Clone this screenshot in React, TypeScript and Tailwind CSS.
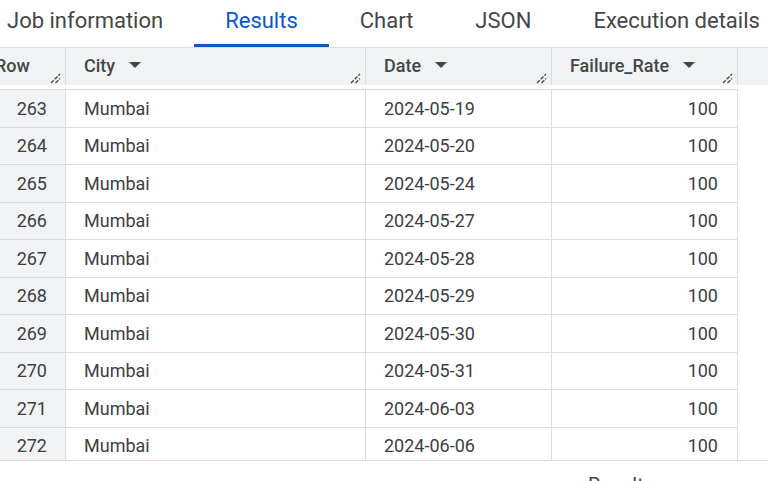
import React from 'react';

const tabs = ['Job information', 'Results', 'Chart', 'JSON', 'Execution details'];

const rows = [
  { n: 263, city: 'Mumbai', date: '2024-05-19', rate: 100 },
  { n: 264, city: 'Mumbai', date: '2024-05-20', rate: 100 },
  { n: 265, city: 'Mumbai', date: '2024-05-24', rate: 100 },
  { n: 266, city: 'Mumbai', date: '2024-05-27', rate: 100 },
  { n: 267, city: 'Mumbai', date: '2024-05-28', rate: 100 },
  { n: 268, city: 'Mumbai', date: '2024-05-29', rate: 100 },
  { n: 269, city: 'Mumbai', date: '2024-05-30', rate: 100 },
  { n: 270, city: 'Mumbai', date: '2024-05-31', rate: 100 },
  { n: 271, city: 'Mumbai', date: '2024-06-03', rate: 100 },
  { n: 272, city: 'Mumbai', date: '2024-06-06', rate: 100 },
];

function SortArrow() {
  return (
    <svg width="12" height="6" viewBox="0 0 12 6" className="ml-[14px] shrink-0">
      <path d="M0 0 L12 0 L6 6 Z" fill="#444746" />
    </svg>
  );
}

function ResizeHandle() {
  return (
    <svg width="11" height="11" viewBox="0 0 11 11" className="absolute right-[4px] bottom-[1px]">
      <path d="M1 10 L10 1 M5.5 10 L10 5.5" stroke="#444746" strokeWidth="1.3" strokeDasharray="4 1.2" fill="none" />
    </svg>
  );
}

export default function App() {
  return (
    <div className="w-[768px] h-[481px] overflow-hidden bg-white font-['Roboto',sans-serif] flex flex-col">
      {/* Tabs */}
      <div className="h-[47px] flex shrink-0 ml-[-24px]">
        {tabs.map((t) => {
          const active = t === 'Results';
          return (
            <div key={t} className="flex flex-col shrink-0 px-[31px]">
              <div
                className={
                  'h-[44px] pb-[3px] flex items-center text-[22px] whitespace-nowrap ' +
                  (active ? 'text-[#0b57d0]' : 'text-[#444746]')
                }
              >
                {t}
              </div>
              <div className={'h-[3px] -mx-[31px] ' + (active ? 'bg-[#0b57d0]' : '')} />
            </div>
          );
        })}
      </div>

      {/* Header */}
      <div className="h-[38px] flex shrink-0 bg-[#f1f3f4] border-t border-[#dadce0] text-[18px] font-medium text-[#444746]">
        <div className="relative w-[66px] border-r border-[#dadce0] flex items-center">
          <span className="ml-[-5px] -mt-[3px]">Row</span>
          <ResizeHandle />
        </div>
        <div className="relative w-[300px] border-r border-[#dadce0] flex items-center pl-[18px]">
          <span className="-mt-[3px]">City</span>
          <span className="-mt-[3px] flex"><SortArrow /></span>
          <ResizeHandle />
        </div>
        <div className="relative w-[186px] border-r border-[#dadce0] flex items-center pl-[18px]">
          <span className="-mt-[3px]">Date</span>
          <span className="-mt-[3px] flex"><SortArrow /></span>
          <ResizeHandle />
        </div>
        <div className="relative w-[186px] border-r border-[#dadce0] flex items-center pl-[18px]">
          <span className="-mt-[3px]">Failure_Rate</span>
          <span className="-mt-[3px] flex"><SortArrow /></span>
          <ResizeHandle />
        </div>
        <div className="flex-1" />
      </div>

      {/* Body */}
      <div className="h-[376px] shrink-0 overflow-hidden border-b border-[#dadce0] pt-[4px]">
        <div className="w-[738px] border-t border-[#dadce0]">
          {rows.map((r) => (
            <div key={r.n} className="h-[37.5px] flex border-b border-[#dadce0] text-[18px] text-[#3c4043]">
              <div className="w-[66px] bg-[#f1f3f4] border-r border-[#dadce0] flex items-center justify-end pr-[18px]">
                {r.n}
              </div>
              <div className="w-[300px] border-r border-[#dadce0] flex items-center pl-[18px]">{r.city}</div>
              <div className="w-[186px] border-r border-[#dadce0] flex items-center pl-[18px]">{r.date}</div>
              <div className="w-[186px] border-r border-[#dadce0] flex items-center justify-end pr-[19px]">
                {r.rate}
              </div>
            </div>
          ))}
        </div>
      </div>

      {/* Footer */}
      <div className="flex-1 relative overflow-hidden">
        <span className="absolute left-[588px] top-[9px] text-[20px] text-[#444746] whitespace-nowrap">
          Results per page:
        </span>
      </div>
    </div>
  );
}
